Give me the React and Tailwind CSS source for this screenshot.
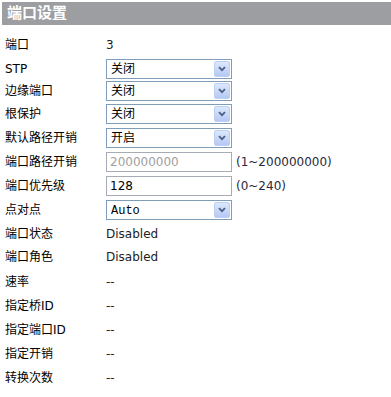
import { useState } from 'react';

const font = { fontFamily: '"DejaVu Sans", "Noto Sans CJK SC", sans-serif' };

function Arrow() {
  return (
    <span className="absolute right-[1px] top-[1px] bottom-[1px] flex w-[16px] items-center justify-center rounded-[2px] border border-[#bcd0f5] bg-gradient-to-b from-[#dde8fd] to-[#b5c9f3]">
      <svg width="8" height="6" viewBox="0 0 8 6">
        <path d="M1 1.2 L4 4.2 L7 1.2" fill="none" stroke="#4d6185" strokeWidth="1.8" />
      </svg>
    </span>
  );
}

function Select({ value, options, onChange, mono }) {
  return (
    <div className="relative h-[20px] w-[126px] border border-[#7f9db9] bg-white">
      <select
        value={value}
        onChange={(e) => onChange(e.target.value)}
        className={`h-full w-full appearance-none bg-transparent pl-[4px] text-[12px] text-black outline-none ${mono ? "font-['Liberation_Mono']" : ''}`}
      >
        {options.map((o) => (
          <option key={o}>{o}</option>
        ))}
      </select>
      <Arrow />
    </div>
  );
}

function Row({ label, h, children }) {
  return (
    <div className={`flex items-center ${h}`}>
      <div className="w-[104px] shrink-0 pl-[3px] text-[12px] text-black">{label}</div>
      <div className="flex items-center text-[12px] text-[#222]">{children}</div>
    </div>
  );
}

export default function App() {
  const [form, setForm] = useState({ stp: '关闭', edge: '关闭', root: '关闭', cost: '开启', p2p: 'Auto', prio: '128' });
  const set = (key) => (value) => setForm({ ...form, [key]: value });
  const onoff = ['关闭', '开启'];

  return (
    <div className="h-[397px] w-[391px] bg-white pt-[2px] pl-[2px]" style={font}>
      <div className="flex h-[23px] items-center bg-[#9c9ea1] pl-[5px] text-[15px] font-bold text-white">端口设置</div>
      <div className="pt-[8px]">
        <Row label="端口" h="h-[24px]">3</Row>
        <Row label="STP" h="h-[23px]">
          <Select value={form.stp} options={onoff} onChange={set('stp')} />
        </Row>
        <Row label="边缘端口" h="h-[22px]">
          <Select value={form.edge} options={onoff} onChange={set('edge')} />
        </Row>
        <Row label="根保护" h="h-[24px]">
          <Select value={form.root} options={onoff} onChange={set('root')} />
        </Row>
        <Row label="默认路径开销" h="h-[24px]">
          <Select value={form.cost} options={onoff} onChange={set('cost')} />
        </Row>
        <Row label="端口路径开销" h="h-[23px]">
          <input
            disabled
            value="200000000"
            readOnly
            className="h-[20px] w-[126px] border border-[#a5acb5] bg-white pl-[3px] text-[12px] text-[#a0a0a0]"
          />
          <span className="ml-[4px] text-[#2a2a3a]">(1~200000000)</span>
        </Row>
        <Row label="端口优先级" h="h-[25px]">
          <input
            value={form.prio}
            onChange={(e) => set('prio')(e.target.value)}
            className="h-[20px] w-[126px] border border-[#a5acb5] bg-white pl-[3px] text-[12px] text-black outline-none"
          />
          <span className="ml-[4px] text-[#2a2a3a]">(0~240)</span>
        </Row>
        <Row label="点对点" h="h-[24px]">
          <Select value={form.p2p} options={['Auto', 'True', 'False']} onChange={set('p2p')} mono />
        </Row>
        <Row label="端口状态" h="h-[23px]">Disabled</Row>
        <Row label="端口角色" h="h-[24px]">Disabled</Row>
        <Row label="速率" h="h-[25px]">--</Row>
        <Row label="指定桥ID" h="h-[24px]">--</Row>
        <Row label="指定端口ID" h="h-[24px]">--</Row>
        <Row label="指定开销" h="h-[24px]">--</Row>
        <Row label="转换次数" h="h-[24px]">--</Row>
      </div>
    </div>
  );
}
